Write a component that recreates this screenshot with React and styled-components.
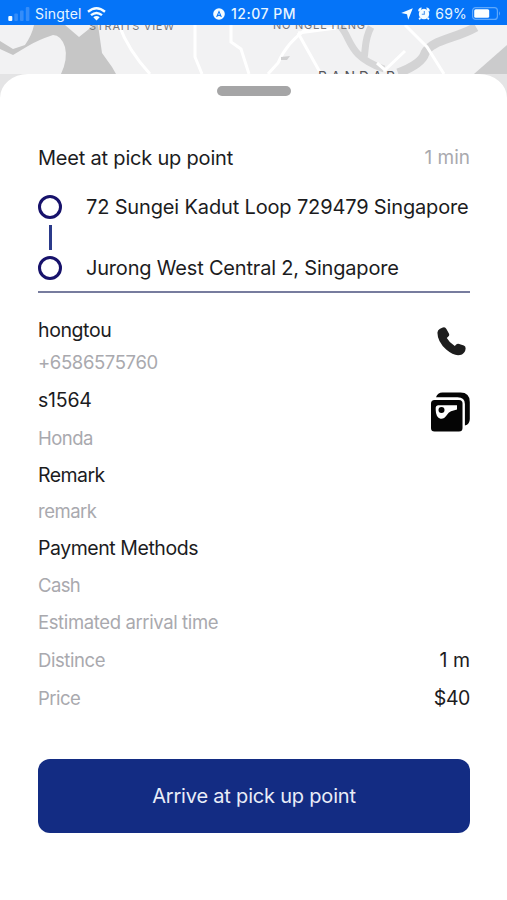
import React from "react";
import styled, { createGlobalStyle } from "styled-components";

const GlobalStyle = createGlobalStyle`
  * { box-sizing: border-box; }
  body { margin: 0; background: #fff; }
`;

const Screen = styled.main`
  display: flex;
  flex-direction: column;
  width: 507px;
  height: 900px;
  overflow: hidden;
  background: #fff;
  font-family: Inter, "Liberation Sans", sans-serif;
`;

const StatusBar = styled.header`
  display: grid;
  grid-template-columns: 1fr auto 1fr;
  align-items: center;
  flex: none;
  height: 25px;
  padding: 2px 6px 0 8px;
  background: #0574f8;
  color: #e8f6ff;
`;

const StatusGroup = styled.div`
  display: flex;
  align-items: center;
  justify-content: ${(p) => p.$align || "flex-start"};
  gap: ${(p) => p.$gap || 5}px;
  svg { display: block; flex: none; }
`;

const StatusText = styled.span`
  font-size: 14px;
  line-height: 18px;
  font-weight: ${(p) => p.$weight || 400};
  letter-spacing: ${(p) => p.$track || 0}px;
  white-space: nowrap;
`;

const MapView = styled.section`
  flex: none;
  height: 75px;
  background: #f2f2f3;
  svg { display: block; }
`;

const Sheet = styled.section`
  display: flex;
  flex-direction: column;
  flex: 1;
  z-index: 1;
  margin-top: -26px;
  padding: 12px 37px 0 38px;
  border-radius: 28px 28px 0 0 / 24px 24px 0 0;
  background: #fff;
`;

const Handle = styled.div`
  flex: none;
  align-self: center;
  width: 74px;
  height: 10px;
  border-radius: 5px;
  background: #a5a5a6;
`;

const Heading = styled.div`
  display: flex;
  align-items: center;
  justify-content: space-between;
  flex: none;
  height: 32px;
  margin-top: 46px;
`;

const Row = styled.div`
  display: flex;
  align-items: center;
  justify-content: space-between;
  flex: none;
  height: ${(p) => p.$h}px;
`;

const Label = styled.span`
  font-size: ${(p) => p.$size || (p.$muted ? 18.5 : 19.5)}px;
  line-height: 24px;
  letter-spacing: ${(p) => p.$track || 0}px;
  color: ${(p) => (p.$muted ? "#a9a9ae" : "#1c1c1e")};
  white-space: nowrap;
`;

const Trip = styled.div`
  display: grid;
  grid-template-columns: 24px 1fr;
  column-gap: 24px;
  flex: none;
  height: 109px;
  margin-top: 10px;
  border-bottom: 2px solid #777c9e;
`;

const Track = styled.div`
  display: flex;
  flex-direction: column;
  align-items: center;
  gap: 6px;
  padding-top: 11px;
`;

const Stop = styled.div`
  width: 24px;
  height: 24px;
  border: 3px solid #17126b;
  border-radius: 50%;
`;

const Link = styled.div`
  width: 3px;
  height: 25px;
  background: #2b3a8a;
`;

const Addresses = styled.div`
  display: flex;
  flex-direction: column;
  gap: 37px;
  padding-top: 11px;
`;

const Contact = styled.div`
  display: flex;
  justify-content: space-between;
  flex: none;
  margin-top: 25px;
`;

const Details = styled.div`
  display: flex;
  flex-direction: column;
`;

const Actions = styled.div`
  display: flex;
  flex-direction: column;
  align-items: flex-end;
  gap: 36px;
  padding-top: 9px;
`;

const IconButton = styled.button`
  display: block;
  padding: 0 ${(p) => p.$inset || 0}px 0 0;
  border: 0;
  background: none;
  svg { display: block; }
`;

const PrimaryButton = styled.button`
  flex: none;
  width: 100%;
  height: 74px;
  margin-top: 43px;
  padding: 0;
  border: 0;
  border-radius: 12px;
  background: #132c83;
  color: #e9edf8;
  font: 400 20px/24px Inter, "Liberation Sans", sans-serif;
  letter-spacing: -0.2px;
`;

function SignalIcon() {
  return (
    <svg width="22" height="14" viewBox="0 0 22 14">
      <rect x="0.3" y="9" width="4" height="5" rx="1" fill="#f4fcff" />
      <g fill="#358df9">
        <rect x="6.3" y="6.5" width="3.6" height="7.5" rx="1" />
        <rect x="12" y="3.5" width="3.6" height="10.5" rx="1" />
        <rect x="17.8" y="0" width="3.6" height="14" rx="1" />
      </g>
    </svg>
  );
}

function WifiIcon() {
  return (
    <svg width="19" height="14" viewBox="0 0 19 14" fill="none" stroke="#f4fcff" strokeWidth="2.4">
      <path d="M1 4.8Q9.5-2.2 18 4.8" />
      <path d="M4 8.2Q9.5 3.6 15 8.2" />
      <path d="M6.3 10.3Q9.5 7.6 12.7 10.3L9.5 13.6Z" fill="#f4fcff" stroke="none" />
    </svg>
  );
}

function NavBadgeIcon() {
  return (
    <svg width="12" height="12" viewBox="0 0 12 12">
      <circle cx="6" cy="6" r="5.8" fill="#f4fcff" />
      <path d="M6 2.2L9 9.2L6 7.8L3 9.2Z" fill="#0574f8" />
      <path d="M6 4.8L7 7L6 6.6L5 7Z" fill="#f4fcff" />
    </svg>
  );
}

function LocationIcon() {
  return (
    <svg width="12" height="12" viewBox="0 0 12 12">
      <path d="M11.8.2L7.2 11.8L6 6.2L.2 5Z" fill="#f4fcff" />
    </svg>
  );
}

function AlarmIcon() {
  return (
    <svg width="12" height="13" viewBox="0 0 12 13">
      <circle cx="6" cy="7" r="5.2" fill="#f4fcff" />
      <path d="M.2 4.2Q.2.6 3.8.6L2.4 4.4ZM11.8 4.2Q11.8.6 8.2.6L9.6 4.4Z" fill="#f4fcff" />
      <path d="M2.4 10.8L1.2 12.4M9.6 10.8L10.8 12.4" stroke="#f4fcff" strokeWidth="1.8" />
      <path d="M6.3 4V7.3H3.8" fill="none" stroke="#4795ee" strokeWidth="1.1" />
    </svg>
  );
}

function BatteryIcon() {
  return (
    <svg width="29" height="13" viewBox="0 0 29 13">
      <rect x=".6" y=".6" width="24.8" height="11.8" rx="3" fill="none" stroke="#5fa8fb" strokeWidth="1.2" />
      <rect x="2.2" y="2.2" width="15" height="8.6" rx="1.5" fill="#fbffff" />
      <path d="M27 4.3Q29 6.5 27 8.7Z" fill="#5fa8fb" />
    </svg>
  );
}

function PhoneIcon() {
  return (
    <svg width="29" height="29" viewBox="0 0 29 29">
      <path d="M3 1.7L5.8.6Q8.2-.3 9.4 2L11.9 6.4Q12.8 8.2 11.3 9.5L9.8 11Q12.2 15.5 17.8 19L19.2 17.5Q20.4 16.4 22.2 17L26.8 18.4Q28.8 19.2 28.6 21.6Q28.3 25.7 25 27.4Q18.2 30.4 9.2 22.6Q0 14 .5 5.3Q.7 2.8 3 1.7Z" fill="#1d1d1d" />
    </svg>
  );
}

function CardsIcon() {
  return (
    <svg width="39" height="40" viewBox="0.5 0 39 40">
      <path d="M5.5 5.2Q7 .5 12 .5H30Q39.3.5 39.3 10V27Q39.3 32.3 34.4 33.5V12Q34.4 5.2 27 5.2Z" fill="#050505" />
      <rect x=".5" y="8" width="31.5" height="31.5" rx="3.5" fill="#050505" />
      <path d="M7.5 13.3H26.5V17.5L20.5 19.3Q18 20.3 16.2 23.2Q13.4 27.3 10 26.7Q5.4 25.8 5.2 18V15.5Q5.4 13.5 7.5 13.3Z" fill="#fff" />
      <circle cx="11" cy="18" r="3" fill="#050505" />
    </svg>
  );
}

function MapDrawing() {
  return (
    <svg width="507" height="75" viewBox="0 0 507 75">
      <path d="M0 49h507v26H0z" fill="#e4e4e5" />
      <path d="M34 0H98L102 28L112 42L116 49H61Q68 34 65 22Q61 10 53 10Q38 15 28 21L13 30L0 24V16L13 24L25 20Q32 10 34 0Z" fill="#c6c6c6" />
      <path d="M65 0L79 12L94 0Z" fill="#f2f2f3" />
      <path d="M341 2C352 15 348 31 384 44M371 2C364 15 366 24 364 33" fill="none" stroke="#d6d6d7" strokeWidth="7" />
      <path d="M476 2C455 14 431 15 425 28Q422 39 398 48" fill="none" stroke="#d3d3d4" strokeWidth="9" />
      <path d="M474 49L507 20V49Z" fill="#cbcbcc" />
      <path d="M119 0Q128 25 150 49M195 0V32L202 49M231 0V17L241 24L249 49M308 3Q287 17 278 38L268 49M298 8L321 49M336 3L298 8M405 0L427 22L444 49M405 26L385 45L377 38" fill="none" stroke="#fff" strokeWidth="3" />
      <path d="M281 32l9-1-3 4h-6z" fill="#d0d0d1" />
      <g fill="#77777c" fontFamily="Inter, sans-serif" fontSize="11">
        <text x="89" y="4.6" textLength="85">STRAITS VIEW</text>
        <text x="273" y="3.8" textLength="92">NO NGEE HENG</text>
        <text x="318" y="57" textLength="77" fontSize="14" fill="#55555a">BANDAR</text>
      </g>
    </svg>
  );
}

export default function App() {
  return (
    <Screen>
      <GlobalStyle />
      <StatusBar>
        <StatusGroup>
          <SignalIcon />
          <StatusText $track={0.2}>Singtel</StatusText>
          <WifiIcon />
        </StatusGroup>
        <StatusGroup $gap={6}>
          <NavBadgeIcon />
          <StatusText $weight={500} $track={0.5}>12:07 PM</StatusText>
        </StatusGroup>
        <StatusGroup $align="flex-end" $gap={5}>
          <LocationIcon />
          <AlarmIcon />
          <StatusText $track={0.2}>69%</StatusText>
          <BatteryIcon />
        </StatusGroup>
      </StatusBar>
      <MapView><MapDrawing /></MapView>
      <Sheet>
        <Handle />
        <Heading>
          <Label $size={20} $track={-0.2}>Meet at pick up point</Label>
          <Label $size={19} $muted>1 min</Label>
        </Heading>
        <Trip>
          <Track>
            <Stop />
            <Link />
            <Stop />
          </Track>
          <Addresses>
            <Label $size={20} $track={-0.15}>72 Sungei Kadut Loop 729479 Singapore</Label>
            <Label $size={20} $track={-0.19}>Jurong West Central 2, Singapore</Label>
          </Addresses>
        </Trip>
        <Contact>
          <Details>
            <Row $h={24}><Label $track={-0.4}>hongtou</Label></Row>
            <Row $h={40}><Label $muted $track={-0.38}>+6586575760</Label></Row>
            <Row $h={36}><Label $track={-0.2}>s1564</Label></Row>
            <Row $h={40}><Label $muted $track={-0.5}>Honda</Label></Row>
          </Details>
          <Actions>
            <IconButton aria-label="Call" $inset={4}><PhoneIcon /></IconButton>
            <IconButton aria-label="Vehicle"><CardsIcon /></IconButton>
          </Actions>
        </Contact>
        <Row $h={34}><Label $track={-0.55}>Remark</Label></Row>
        <Row $h={38}><Label $muted $track={-0.5}>remark</Label></Row>
        <Row $h={36}><Label $track={-0.45}>Payment Methods</Label></Row>
        <Row $h={38}><Label $muted $track={-0.6}>Cash</Label></Row>
        <Row $h={36}><Label $muted $track={-0.38}>Estimated arrival time</Label></Row>
        <Row $h={40}>
          <Label $muted $track={-0.42}>Distince</Label>
          <Label>1 m</Label>
        </Row>
        <Row $h={36}>
          <Label $muted $track={-0.55}>Price</Label>
          <Label $track={-0.4}>$40</Label>
        </Row>
        <PrimaryButton>Arrive at pick up point</PrimaryButton>
      </Sheet>
    </Screen>
  );
}
